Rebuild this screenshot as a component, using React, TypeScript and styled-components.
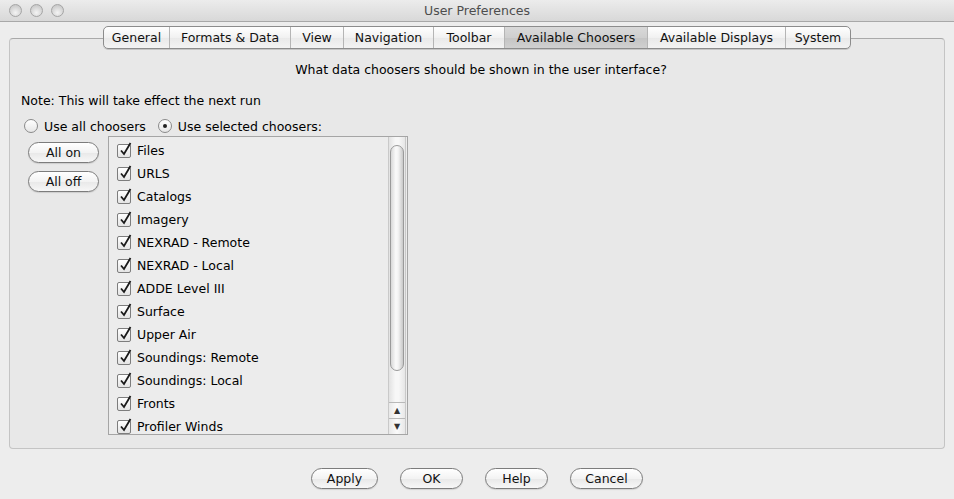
import React from "react";
import styled, { createGlobalStyle } from "styled-components";

const Global = createGlobalStyle`
  html, body { margin: 0; padding: 0; }
  body {
    background: #ededed;
    font-family: "DejaVu Sans", "Liberation Sans", sans-serif;
    font-size: 12.5px;
    color: #000;
    width: 954px;
    height: 499px;
    overflow: hidden;
  }
`;

const Window = styled.div`
  width: 954px;
  height: 499px;
  display: flex;
  flex-direction: column;
  background: #ededed;
`;

const TitleBar = styled.div`
  height: 22px;
  flex: none;
  display: flex;
  align-items: center;
  position: relative;
  background: linear-gradient(#ececec, #d8d8d8);
  border-bottom: 1px solid #a8a8a8;
  box-sizing: border-box;
`;

const Lights = styled.div`
  display: flex;
  gap: 8px;
  padding-left: 9px;
`;

const Light = styled.div`
  width: 13px;
  height: 13px;
  border-radius: 50%;
  box-sizing: border-box;
  border: 1px solid #a5a5a5;
  background: radial-gradient(circle at 50% 70%, #f4f4f4, #c9c9c9 80%);
`;

const Title = styled.div`
  position: absolute;
  left: 0;
  right: 0;
  top: 0;
  bottom: 0;
  display: flex;
  align-items: center;
  justify-content: center;
  color: #4d4d4d;
  font-size: 12.5px;
  pointer-events: none;
`;

const Body = styled.div`
  flex: 1;
  display: flex;
  flex-direction: column;
  padding: 4px 9px 0 9px;
`;

const TabArea = styled.div`
  position: relative;
  height: 423px;
  display: flex;
  flex-direction: column;
`;

const TabPanel = styled.div`
  margin-top: 12px;
  flex: 1;
  border: 1px solid #c4c4c4;
  border-top-color: #a9a9a9;
  border-radius: 4px;
  background: #e8e8e8;
  display: flex;
  flex-direction: column;
  padding: 23px 0 0 11px;
`;

const TabStrip = styled.div`
  position: absolute;
  top: 0;
  left: 94px;
  display: flex;
  height: 21px;
  border: 1px solid #8c8c8c;
  border-radius: 5px;
  overflow: hidden;
  background: linear-gradient(#ffffff, #f1f1f1 50%, #e9e9e9 51%, #f3f3f3);
  box-shadow: 0 1px 0 rgba(0,0,0,0.15);
`;

const Tab = styled.div<{ $active?: boolean; $w: number }>`
  width: ${(p) => p.$w}px;
  box-sizing: border-box;
  display: flex;
  align-items: center;
  justify-content: center;
  font-size: 12.5px;
  color: #111;
  border-left: 1px solid #b5b5b5;
  &:first-child { border-left: none; }
  background: ${(p) =>
    p.$active
      ? "linear-gradient(#d9d9d9, #cfcfcf 50%, #c4c4c4 51%, #d0d0d0)"
      : "transparent"};
`;

const Question = styled.div`
  text-align: center;
  padding-right: 11px;
  line-height: 16px;
  height: 16px;
  margin-left: 8px;
`;

const Note = styled.div`
  margin-top: 15px;
  line-height: 16px;
`;

const RadioRow = styled.div`
  margin-top: 8px;
  display: flex;
  align-items: center;
  height: 18px;
  margin-left: 3px;
`;

const RadioItem = styled.label`
  display: flex;
  align-items: center;
  gap: 6px;
  margin-right: 12px;
`;

const Radio = styled.span<{ $on?: boolean }>`
  width: 14px;
  height: 14px;
  border-radius: 50%;
  box-sizing: border-box;
  border: 1px solid #8a8a8a;
  background: linear-gradient(#ffffff, #e6e6e6);
  display: flex;
  align-items: center;
  justify-content: center;
  &::after {
    content: "";
    width: 4px;
    height: 4px;
    border-radius: 50%;
    background: ${(p) => (p.$on ? "#222" : "transparent")};
  }
`;

const Content = styled.div`
  display: flex;
  margin-top: 1px;
`;

const SideButtons = styled.div`
  display: flex;
  flex-direction: column;
  gap: 8px;
  padding-top: 6px;
  width: 87px;
  flex: none;
  padding-left: 7px;
  box-sizing: border-box;
`;

const PillButton = styled.button<{ $w: number }>`
  width: ${(p) => p.$w}px;
  height: 21px;
  border-radius: 11px;
  border: 1px solid #7c7c7c;
  background: linear-gradient(#ffffff, #f3f3f3 50%, #e8e8e8 51%, #f7f7f7);
  font-family: "DejaVu Sans", "Liberation Sans", sans-serif;
  font-size: 12.5px;
  color: #111;
  padding: 0;
  box-shadow: 0 1px 1px rgba(0,0,0,0.12);
`;

const ListBox = styled.div`
  width: 300px;
  height: 299px;
  box-sizing: border-box;
  border: 1px solid #a5a5a5;
  background: #ececec;
  display: flex;
  overflow: hidden;
`;

const ListItems = styled.div`
  flex: 1;
  padding-top: 2px;
  padding-left: 8px;
  display: flex;
  flex-direction: column;
`;

const Item = styled.div`
  height: 23px;
  display: flex;
  align-items: center;
  gap: 6px;
  flex: none;
`;

const Check = styled.span`
  width: 14px;
  height: 14px;
  flex: none;
  box-sizing: border-box;
  border: 1px solid #7d7d7d;
  border-radius: 2px;
  background: linear-gradient(#ffffff, #e4e4e4);
  position: relative;
  display: block;
`;

const CheckMark = styled.svg`
  position: absolute;
  left: 1px;
  top: -4px;
`;

const ScrollBar = styled.div`
  width: 16px;
  flex: none;
  margin-right: 1px;
  display: flex;
  flex-direction: column;
  background: linear-gradient(90deg, #e2e2e2, #f7f7f7 40%, #f7f7f7 60%, #e6e6e6);
  border-left: 1px solid #c9c9c9;
  border-right: 1px solid #c9c9c9;
`;

const Track = styled.div`
  flex: 1;
  padding: 8px 1px 0 1px;
  display: flex;
  flex-direction: column;
`;

const Thumb = styled.div`
  height: 224px;
  border-radius: 7px;
  border: 1px solid #9a9a9a;
  background: linear-gradient(90deg, #d8d8d8, #fafafa 40%, #f3f3f3 60%, #c8c8c8);
`;

const Arrow = styled.div`
  height: 15px;
  display: flex;
  align-items: center;
  justify-content: center;
  border-top: 1px solid #b9b9b9;
  background: linear-gradient(90deg, #e8e8e8, #fbfbfb 50%, #e8e8e8);
  font-size: 8px;
  color: #333;
`;

const Footer = styled.div`
  flex: 1;
  display: flex;
  justify-content: center;
  align-items: flex-start;
  padding-top: 19px;
  gap: 22px;
`;

const items = [
  "Files",
  "URLS",
  "Catalogs",
  "Imagery",
  "NEXRAD - Remote",
  "NEXRAD - Local",
  "ADDE Level III",
  "Surface",
  "Upper Air",
  "Soundings: Remote",
  "Soundings: Local",
  "Fronts",
  "Profiler Winds",
];

const tabs: [string, number][] = [
  ["General", 65],
  ["Formats & Data", 121],
  ["View", 53],
  ["Navigation", 90],
  ["Toolbar", 71],
  ["Available Choosers", 143],
  ["Available Displays", 138],
  ["System", 65],
];

export default function App() {
  return (
    <Window>
      <Global />
      <TitleBar>
        <Lights>
          <Light />
          <Light />
          <Light />
        </Lights>
        <Title>User Preferences</Title>
      </TitleBar>
      <Body>
        <TabArea>
          <TabPanel>
            <Question>What data choosers should be shown in the user interface?</Question>
            <Note>Note: This will take effect the next run</Note>
            <RadioRow>
              <RadioItem>
                <Radio />
                Use all choosers
              </RadioItem>
              <RadioItem>
                <Radio $on />
                Use selected choosers:
              </RadioItem>
            </RadioRow>
            <Content>
              <SideButtons>
                <PillButton $w={71}>All on</PillButton>
                <PillButton $w={71}>All off</PillButton>
              </SideButtons>
              <ListBox>
                <ListItems>
                  {items.map((t) => (
                    <Item key={t}>
                      <Check>
                        <CheckMark width="14" height="16" viewBox="0 0 14 16">
                          <path d="M2 9.5 L5 13 L11.5 2" fill="none" stroke="#1a1a1a" strokeWidth="1.8" />
                        </CheckMark>
                      </Check>
                      {t}
                    </Item>
                  ))}
                </ListItems>
                <ScrollBar>
                  <Track>
                    <Thumb />
                  </Track>
                  <Arrow>▲</Arrow>
                  <Arrow>▼</Arrow>
                </ScrollBar>
              </ListBox>
            </Content>
          </TabPanel>
          <TabStrip>
            {tabs.map(([t, w]) => (
              <Tab key={t} $w={w} $active={t === "Available Choosers"}>
                {t}
              </Tab>
            ))}
          </TabStrip>
        </TabArea>
        <Footer>
          <PillButton $w={67}>Apply</PillButton>
          <PillButton $w={63}>OK</PillButton>
          <PillButton $w={63}>Help</PillButton>
          <PillButton $w={73}>Cancel</PillButton>
        </Footer>
      </Body>
    </Window>
  );
}
